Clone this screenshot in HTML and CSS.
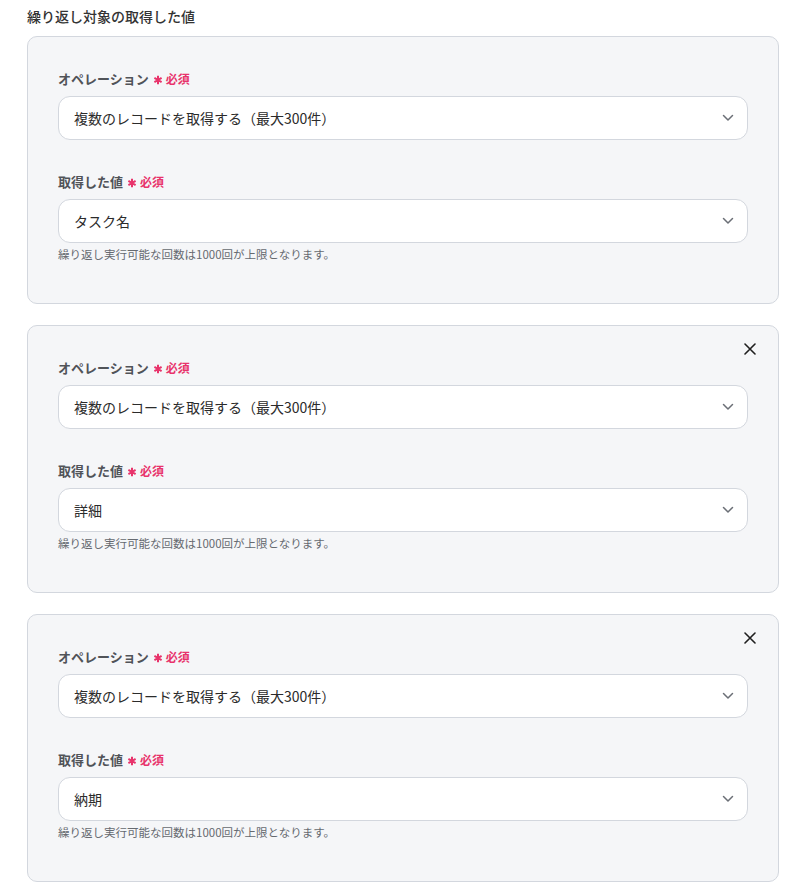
FILE: index.html
```html
<!DOCTYPE html>
<html lang="ja">
<head>
<meta charset="utf-8">
<title>繰り返し対象の取得した値</title>
<link rel="stylesheet" href="styles.css">
</head>
<body>
<section class="repeat">
  <h2 class="repeat-title">繰り返し対象の取得した値</h2>

  <div class="card">
    <div class="field">
      <label class="field-label">オペレーション<svg class="req-mark" viewBox="0 0 10 10" width="10" height="10"><path d="M5 0.8v8.4M1.4 2.9l7.2 4.2M8.6 2.9 1.4 7.1" stroke="#e8336b" stroke-width="2"/></svg><span class="req">必須</span></label>
      <div class="select"><span>複数のレコードを取得する（最大300件）</span><svg class="chev" viewBox="0 0 12 8" width="12" height="8"><path d="M1.5 1.5 6 6l4.5-4.5" fill="none" stroke="#6b6f76" stroke-width="1.5" stroke-linecap="round" stroke-linejoin="round"/></svg></div>
    </div>
    <div class="field">
      <label class="field-label">取得した値<svg class="req-mark" viewBox="0 0 10 10" width="10" height="10"><path d="M5 0.8v8.4M1.4 2.9l7.2 4.2M8.6 2.9 1.4 7.1" stroke="#e8336b" stroke-width="2"/></svg><span class="req">必須</span></label>
      <div class="select"><span>タスク名</span><svg class="chev" viewBox="0 0 12 8" width="12" height="8"><path d="M1.5 1.5 6 6l4.5-4.5" fill="none" stroke="#6b6f76" stroke-width="1.5" stroke-linecap="round" stroke-linejoin="round"/></svg></div>
      <p class="help">繰り返し実行可能な回数は1000回が上限となります。</p>
    </div>
  </div>

  <div class="card">
    <button class="remove" type="button" aria-label="削除"><svg viewBox="0 0 12 12" width="12" height="12"><path d="M1 1l10 10M11 1 1 11" stroke="#1f1f1f" stroke-width="1.6" stroke-linecap="round"/></svg></button>
    <div class="field">
      <label class="field-label">オペレーション<svg class="req-mark" viewBox="0 0 10 10" width="10" height="10"><path d="M5 0.8v8.4M1.4 2.9l7.2 4.2M8.6 2.9 1.4 7.1" stroke="#e8336b" stroke-width="2"/></svg><span class="req">必須</span></label>
      <div class="select"><span>複数のレコードを取得する（最大300件）</span><svg class="chev" viewBox="0 0 12 8" width="12" height="8"><path d="M1.5 1.5 6 6l4.5-4.5" fill="none" stroke="#6b6f76" stroke-width="1.5" stroke-linecap="round" stroke-linejoin="round"/></svg></div>
    </div>
    <div class="field">
      <label class="field-label">取得した値<svg class="req-mark" viewBox="0 0 10 10" width="10" height="10"><path d="M5 0.8v8.4M1.4 2.9l7.2 4.2M8.6 2.9 1.4 7.1" stroke="#e8336b" stroke-width="2"/></svg><span class="req">必須</span></label>
      <div class="select"><span>詳細</span><svg class="chev" viewBox="0 0 12 8" width="12" height="8"><path d="M1.5 1.5 6 6l4.5-4.5" fill="none" stroke="#6b6f76" stroke-width="1.5" stroke-linecap="round" stroke-linejoin="round"/></svg></div>
      <p class="help">繰り返し実行可能な回数は1000回が上限となります。</p>
    </div>
  </div>

  <div class="card">
    <button class="remove" type="button" aria-label="削除"><svg viewBox="0 0 12 12" width="12" height="12"><path d="M1 1l10 10M11 1 1 11" stroke="#1f1f1f" stroke-width="1.6" stroke-linecap="round"/></svg></button>
    <div class="field">
      <label class="field-label">オペレーション<svg class="req-mark" viewBox="0 0 10 10" width="10" height="10"><path d="M5 0.8v8.4M1.4 2.9l7.2 4.2M8.6 2.9 1.4 7.1" stroke="#e8336b" stroke-width="2"/></svg><span class="req">必須</span></label>
      <div class="select"><span>複数のレコードを取得する（最大300件）</span><svg class="chev" viewBox="0 0 12 8" width="12" height="8"><path d="M1.5 1.5 6 6l4.5-4.5" fill="none" stroke="#6b6f76" stroke-width="1.5" stroke-linecap="round" stroke-linejoin="round"/></svg></div>
    </div>
    <div class="field">
      <label class="field-label">取得した値<svg class="req-mark" viewBox="0 0 10 10" width="10" height="10"><path d="M5 0.8v8.4M1.4 2.9l7.2 4.2M8.6 2.9 1.4 7.1" stroke="#e8336b" stroke-width="2"/></svg><span class="req">必須</span></label>
      <div class="select"><span>納期</span><svg class="chev" viewBox="0 0 12 8" width="12" height="8"><path d="M1.5 1.5 6 6l4.5-4.5" fill="none" stroke="#6b6f76" stroke-width="1.5" stroke-linecap="round" stroke-linejoin="round"/></svg></div>
      <p class="help">繰り返し実行可能な回数は1000回が上限となります。</p>
    </div>
  </div>
</section>
</body>
</html>
```

FILE: styles.css
```css
* { box-sizing: border-box; }

html, body {
  margin: 0;
  background: #ffffff;
}

body {
  font-family: "Noto Sans CJK JP", "Noto Sans", sans-serif;
  color: #333333;
}

.repeat {
  padding: 6px 30px 0 27px;
  display: flex;
  flex-direction: column;
  gap: 21px;
}

.repeat-title {
  margin: 0 0 -11px;
  font-size: 14px;
  line-height: 20px;
  font-weight: 500;
  color: #333333;
}

.card {
  position: relative;
  width: 752px;
  background: #f5f6f8;
  border: 1px solid #d3d7de;
  border-radius: 10px;
  padding: 31px 30px 42px;
  display: flex;
  flex-direction: column;
  gap: 31px;
}

.remove {
  position: absolute;
  top: 15px;
  right: 20px;
  width: 16px;
  height: 16px;
  padding: 2px;
  border: 0;
  background: none;
  display: flex;
  align-items: center;
  justify-content: center;
  cursor: pointer;
}

.field {
  display: flex;
  flex-direction: column;
}

.field-label {
  display: flex;
  align-items: center;
  height: 20px;
  font-size: 13px;
  font-weight: 700;
  color: #505358;
}

.req-mark {
  display: block;
  flex: none;
  margin: 4px 3px 0 4px;
}

.req {
  color: #e8336b;
  font-size: 12px;
  font-weight: 700;
}

.select {
  margin-top: 8px;
  height: 44px;
  background: #ffffff;
  border: 1px solid #d3d7de;
  border-radius: 12px;
  padding: 0 13px 0 15px;
  display: flex;
  align-items: center;
  justify-content: space-between;
  font-size: 14px;
  color: #2b2b2b;
}

.chev {
  display: block;
  flex: none;
}

.help {
  margin: 4px 0 0;
  font-size: 11.5px;
  line-height: 14px;
  color: #666a70;
}
```
